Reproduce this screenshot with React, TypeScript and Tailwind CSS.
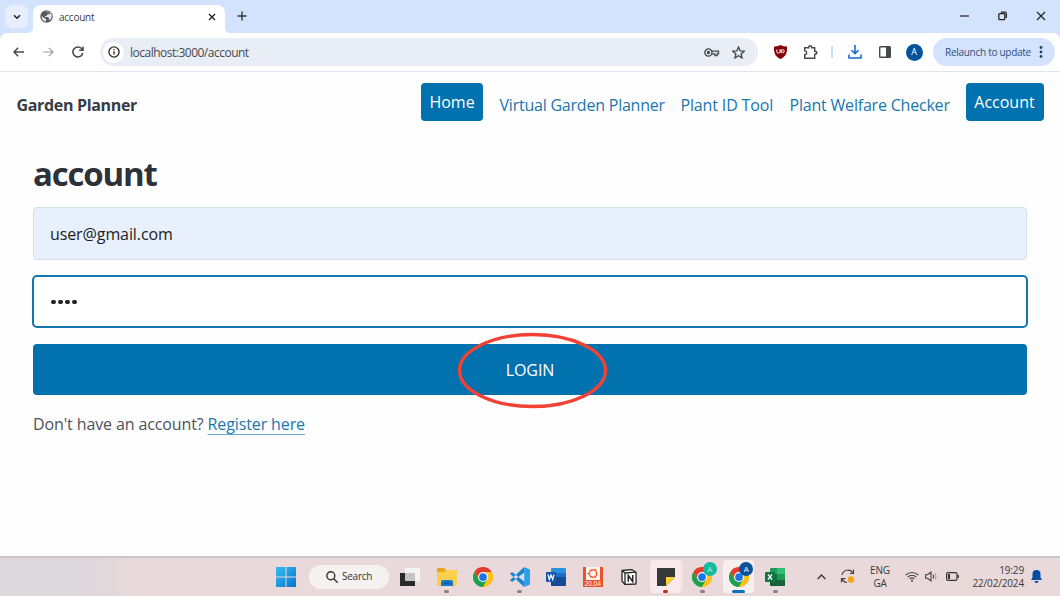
import React from 'react';

const SANS = "font-['Open_Sans','Noto_Sans',sans-serif]";

function Chrome({ size = 20 }: { size?: number }) {
  return (
    <svg width={size} height={size} viewBox="0 0 48 48">
      <circle cx="24" cy="24" r="24" fill="#fbc116" />
      <path d="M3.2 12A24 24 0 0 1 44.8 12L24 12 13.6 30Z" fill="#e33b2e" />
      <path d="M3.2 12A24 24 0 0 0 24 48L34.4 30 24 36 13.6 30Z" fill="#1ea051" />
      <path d="M44.8 12A24 24 0 0 1 24 48L34.4 30A12 12 0 0 0 34.4 18L31 12Z" fill="#fbc116" />
      <circle cx="24" cy="24" r="12" fill="#fff" />
      <circle cx="24" cy="24" r="9.3" fill="#1a73e8" />
    </svg>
  );
}

function TabStrip() {
  return (
    <div className="flex h-[33px] shrink-0 items-end bg-[#d3e2fd]">
      <div className="mb-[5px] ml-[5px] flex h-[23px] w-[23px] items-center justify-center rounded-[7px] bg-[#e6effe]">
        <svg width="8" height="6" viewBox="0 0 8 6" fill="none" stroke="#222" strokeWidth="1.6"><path d="M1 1.2l3 3 3-3" /></svg>
      </div>
      <svg width="5" height="5" viewBox="0 0 5 5"><path d="M5 0v5H0A5 5 0 0 0 5 0Z" fill="#fff" /></svg>
      <div className="flex h-[28px] w-[192px] items-center rounded-t-[8px] bg-white pb-[5px] pl-[7px] pr-[9px]">
        <svg width="13" height="13" viewBox="0 0 24 24">
          <circle cx="12" cy="12" r="11.5" fill="#575b60" />
          <path d="M3 11l5 4 3 1v5C6 21 3 17 3 11ZM10 3l5-.5 4 3.500-2 2-3 0-1 2-3 1-1 2h6l2 3-1 2 3 0c4-5 3-10 0-14" fill="#e9ecef" />
        </svg>
        <span className="ml-[6px] pt-[2px] text-[10px] tracking-[-0.25px] text-[#3c4043]">account</span>
        <svg className="ml-auto" width="8" height="8" viewBox="0 0 8 8" stroke="#222" strokeWidth="1.4"><path d="M1 1l6 6M7 1L1 7" /></svg>
      </div>
      <svg width="5" height="5" viewBox="0 0 5 5"><path d="M0 0v5h5A5 5 0 0 1 0 0Z" fill="#fff" /></svg>
      <svg className="mb-[12px] ml-[7px]" width="10" height="10" viewBox="0 0 10 10" stroke="#33383f" strokeWidth="1.4"><path d="M5 .5v9M.5 5h9" /></svg>
      <div className="mb-[12px] ml-auto mr-[14px] flex items-center">
        <svg width="9" height="10" viewBox="0 0 9 10" stroke="#222" strokeWidth="1.2"><path d="M0 5h9" /></svg>
        <svg className="ml-[29px]" width="9" height="10" viewBox="0 0 9 10" fill="none" stroke="#222" strokeWidth="1.3"><rect x=".8" y="2.700" width="6" height="6" rx="1" /><path d="M2.800 1.100H7q1.300 0 1.300 1.300V7" /></svg>
        <svg className="ml-[29px]" width="10" height="10" viewBox="0 0 10 10" stroke="#222" strokeWidth="1.2"><path d="M1 1l8 8M9 1L1 9" /></svg>
      </div>
    </div>
  );
}

function Toolbar() {
  return (
    <div className="bg-[#d3e2fd]">
      <div className="flex h-[39px] items-center rounded-t-[7px] border-b border-[#dfe5e8] bg-white pl-[13px] pr-[5px]">
        <svg width="11" height="10" viewBox="0 0 11 10" fill="none" stroke="#45484d" strokeWidth="1.500"><path d="M11 5H1.200M5.200.8L1 5l4.200 4.200" /></svg>
        <svg className="ml-[19px]" width="11" height="10" viewBox="0 0 11 10" fill="none" stroke="#9b9da0" strokeWidth="1.200"><path d="M0 5h9.800M5.800.8L10 5 5.800 9.200" /></svg>
        <svg className="ml-[18px]" width="12" height="12" viewBox="0 0 12 12" fill="none" stroke="#45484d" strokeWidth="1.500"><path d="M10.800 7A5 5 0 1 1 9.600 2.600L10.800 4M11 .5V4.300H7.200" /></svg>
        <div className="ml-[16px] flex h-[28px] w-[658px] items-center rounded-full bg-[#e9edf6] pl-[3px] pr-[13px]">
          <div className="flex h-[21px] w-[21px] items-center justify-center rounded-full bg-white">
            <svg width="12" height="12" viewBox="0 0 12 12" fill="none" stroke="#333" strokeWidth="1.400"><circle cx="6" cy="6" r="5.100" /><path d="M6 5.200v3.400M6 3v1.200" /></svg>
          </div>
          <span className="ml-[6px] pt-px text-[12px] tracking-[-0.5px] text-[#474b50]">localhost:3000/account</span>
          <svg className="ml-auto" width="16" height="9" viewBox="0 0 16 9" fill="none" stroke="#45484d" strokeWidth="1.300"><circle cx="4.400" cy="4.500" r="3.600" /><circle cx="4.400" cy="4.500" r="1" fill="#45484d" /><path d="M7.800 3.200h6.700v2.600h-1.400v1.900h-2.200V5.800H7.800" /></svg>
          <svg className="ml-[12px]" width="13" height="13" viewBox="0 0 24 24" fill="none" stroke="#45484d" strokeWidth="2.500"><path d="M12 2l3 7 7.500.6-5.700 5 1.700 7.400L12 18l-6.500 4 1.700-7.400-5.700-5L9 9Z" /></svg>
        </div>
        <svg className="ml-[16px]" width="13" height="14" viewBox="0 0 13 14"><path d="M6.500 0q3 1.500 6.500 1.500c.3 6-1 10-6.500 12.500C1 11.500-.3 7.500 0 1.500 3.500 1.500 6.500 0 6.500 0Z" fill="#86040c" /><path d="M2.800 4.500v2q0 1.600 1.600 1.600T6 6.500v-2m1 0v3.300M10.200 6.200a1.500 1.500 0 1 0-3 0 1.500 1.500 0 0 0 3 0Z" fill="none" stroke="#fff" strokeWidth="1" /></svg>
        <svg className="ml-[16px]" width="15" height="15" viewBox="0 0 15 15" fill="none" stroke="#45484d" strokeWidth="1.400"><path d="M1.700 2.700h4c0-2.600 3-2.600 3 0h3v3.600c2.800 0 2.800 3 0 3v4H1.700V9.700c2.500 0 2.500-3.800 0-3.800Z" /></svg>
        <div className="ml-[13px] h-[12px] w-[1.500px] bg-[#c9dcf9]" />
        <svg className="ml-[15px]" width="14" height="14" viewBox="0 0 14 14" fill="none" stroke="#1968d2" strokeWidth="1.600"><path d="M7 0v8.500M3.500 5.200L7 8.700l3.500-3.500M1 9.500V13h12V9.500" /></svg>
        <svg className="ml-[17px]" width="12" height="12" viewBox="0 0 12 12"><rect x=".7" y=".7" width="10.600" height="10.600" rx=".8" fill="none" stroke="#45484d" strokeWidth="1.400" /><path d="M7 1h4v10H7Z" fill="#45484d" /></svg>
        <div className="ml-[15px] flex h-[17px] w-[17px] items-center justify-center rounded-full bg-[#02539a] text-[9px] text-white">A</div>
        <div className="ml-auto flex h-[28px] w-[122px] items-center rounded-full bg-[#d3e2fd] pl-[12px]">
          <span className="whitespace-nowrap pt-px text-[10px] tracking-[-0.28px] text-[#34517b]">Relaunch to update</span>
          <svg className="ml-auto mr-[12px]" width="4" height="12" viewBox="0 0 4 12" fill="#1e426f"><circle cx="2" cy="1.500" r="1.400" /><circle cx="2" cy="6" r="1.400" /><circle cx="2" cy="10.500" r="1.400" /></svg>
        </div>
      </div>
    </div>
  );
}

function SiteNav() {
  const link = 'whitespace-nowrap text-[#1977ad]';
  return (
    <nav className="flex h-[66px] items-center pl-[16.500px] pr-[16.500px] text-[16px]">
      <span className="whitespace-nowrap font-bold tracking-[-0.33px] text-[#373c44]">Garden Planner</span>
      <a className="mb-[7px] ml-auto flex h-[38px] w-[62px] items-center justify-center rounded-[4px] bg-[#0172ad] pt-px text-white">Home</a>
      <a className={`${link} ml-[16.500px] w-[165px] tracking-[-0.22px]`}>Virtual Garden Planner</a>
      <a className={`${link} ml-[16px] w-[93px] tracking-[-0.15px]`}>Plant ID Tool</a>
      <a className={`${link} ml-[16px] w-[160px] tracking-[-0.2px]`}>Plant Welfare Checker</a>
      <a className="mb-[7px] ml-[16px] flex h-[38px] w-[78px] items-center justify-center rounded-[4px] bg-[#0172ad] pt-px text-white">Account</a>
    </nav>
  );
}

function LoginForm() {
  return (
    <main className="flex flex-1 flex-col px-[33px] pt-[12px] text-[16px]">
      <h1 className="h-[57px] text-[33px] font-bold leading-[48px] tracking-[-1.200px] text-[#2d3138]">account</h1>
      <div className="flex h-[53px] items-center rounded-[4px] border border-[#d5deeb] bg-[#e8f0fe] pl-[16px] pt-px tracking-[-0.1px] text-[#1b1d20]">user@gmail.com</div>
      <div className="mx-[-1px] mt-[15px] flex h-[53px] items-center gap-[2.500px] rounded-[5px] border-2 border-[#1177ae] bg-white pl-[17px] pt-px">
        {[0, 1, 2, 3].map((n) => <span key={n} className="h-[4.500px] w-[4.500px] rounded-full bg-[#222]" />)}
      </div>
      <div className="relative mt-[16px] flex h-[51px] items-center justify-center rounded-[4px] bg-[#0172ad] text-white">
        <span className="tracking-[-0.1px]">LOGIN</span>
        <svg className="absolute left-[424px] top-[-12px]" width="151" height="77" viewBox="0 0 151 77" fill="none" stroke="#f34235" strokeWidth="3.400"><ellipse cx="75.500" cy="38.500" rx="73" ry="36" /></svg>
      </div>
      <p className="mt-[17px] tracking-[-0.12px] text-[#4d525a]">Don't have an account? <a className="text-[#1977ad] underline decoration-[#68aed5] decoration-1 underline-offset-[4px] [text-decoration-skip-ink:none]">Register here</a></p>
    </main>
  );
}

function Slot({ children, mark = '', active = '' }: { children: React.ReactNode; mark?: string; active?: string }) {
  return (
    <div className="flex w-[36.500px] justify-center">
      <div className={`relative flex h-[33px] w-[31px] items-center justify-center rounded-[4px] ${active}`}>
        {children}
        {mark && <span className={`absolute bottom-0 h-[3px] rounded-full ${mark}`} />}
      </div>
    </div>
  );
}

function Taskbar() {
  return (
    <footer className="flex h-[40px] shrink-0 items-center border-t-2 border-[#cec5c7] bg-[linear-gradient(90deg,#dcd8dc_0px,#dcd8dc_85px,#ead9da_150px)] pb-px">
      <div className="ml-[267.500px] flex items-center">
        <Slot><svg width="20" height="20" viewBox="0 0 20 20"><defs><linearGradient id="win" x2="1" y2="1"><stop stopColor="#36bdf0" /><stop offset="1" stopColor="#0873d0" /></linearGradient></defs><path d="M0 0h9.500v9.500H0ZM10.500 0H20v9.500h-9.500ZM0 10.500h9.500V20H0ZM10.500 10.500H20V20h-9.500Z" fill="url(#win)" /></svg></Slot>
        <div className="ml-[5px] mr-[3px] flex h-[24px] w-[80px] items-center rounded-full bg-[#f7f2f2] pl-[17px]">
          <svg width="12" height="12" viewBox="0 0 12 12" fill="none" stroke="#333" strokeWidth="1.400"><circle cx="4.800" cy="4.800" r="4" /><path d="M7.700 7.700l4 4" /></svg>
          <span className="ml-[4px] text-[10px] font-medium tracking-[-0.25px] text-[#333]">Search</span>
        </div>
        <Slot><svg width="20" height="18" viewBox="0 0 20 18"><path d="M0 5h15v13H0Z" fill="#292a2d" /><path d="M5 0h15v13H5Z" fill="#f5f4f4" /><path d="M5 5h10v8H5Z" fill="#c4c2c3" /></svg></Slot>
        <Slot mark="w-[5px] bg-[#8b8082]"><svg width="20" height="18" viewBox="0 0 20 18"><path d="M0 1.500Q0 0 1.500 0H7l2 2h9.500Q20 2 20 3.500V16q0 1.500-1.500 1.500h-17Q0 17.500 0 16Z" fill="#e8a31a" /><path d="M0 4h7l2-2h9.500Q20 2 20 3.500V16q0 1.500-1.500 1.500h-17Q0 17.500 0 16Z" fill="#fbd04c" /><path d="M4 18v-4q0-2 2-2h8q2 0 2 2v4Z" fill="#1777c9" /><path d="M7 14.500h6v1.200H7Z" fill="#0b559c" /></svg></Slot>
        <Slot><Chrome /></Slot>
        <Slot mark="w-[5px] bg-[#8b8082]"><svg width="20" height="20" viewBox="0 0 24 24"><path d="M17 17.500L2.500 6 0 8l17 16ZM17 6.500L2.500 18 0 16 17 0Z" fill="#1684cf" /><path d="M17 0l7 3v18l-7 3Z" fill="#29a2eb" /></svg></Slot>
        <Slot><svg width="20" height="18" viewBox="0 0 20 18"><rect x="5" width="15" height="18" rx="1" fill="#2b91df" /><path d="M5 5h15v4H5Z" fill="#1d6dc3" /><path d="M5 9h15v8q0 1-1 1H6q-1 0-1-1Z" fill="#174b96" /><rect y="4" width="10" height="10" rx="1" fill="#1653ad" /><path d="M2 6.500l1.300 5L5 7l1.700 4.500L8 6.500" fill="none" stroke="#fff" strokeWidth="1.200" /></svg></Slot>
        <Slot>
          <div className="flex h-[20px] w-[20px] flex-col items-center bg-[#e8532a]">
            <svg width="14" height="13" viewBox="0 0 14 13"><path d="M0 0h14v13H0Z" fill="#fff5ef" /><circle cx="7" cy="6.500" r="3.700" fill="none" stroke="#e8532a" strokeWidth="1.500" /><circle cx="3" cy="6.500" r="1.500" fill="#e8532a" stroke="#fff5ef" strokeWidth=".6" /><circle cx="9" cy="3" r="1.500" fill="#e8532a" stroke="#fff5ef" strokeWidth=".6" /><circle cx="9" cy="10" r="1.500" fill="#e8532a" stroke="#fff5ef" strokeWidth=".6" /></svg>
            <span className="text-[6.500px] leading-[7px] text-white">20.04</span>
          </div>
        </Slot>
        <Slot><svg width="16" height="16" viewBox="0 0 16 16"><path d="M1 1.500L11 .7l4 2.500V15l-11 .5L1 12Z" fill="#fff" stroke="#262626" strokeWidth="1.300" strokeLinejoin="round" /><path d="M1 1.500L4 4l11-.8M4 4v11.500" fill="none" stroke="#262626" strokeWidth="1.300" /><path d="M7.300 12.800V6.500l4.400 6V6" fill="none" stroke="#222" strokeWidth="1.500" /></svg></Slot>
        <Slot mark="w-[5px] bg-[#c42b1c]" active="bg-[#fae9ea] shadow-[2px_0_0_#f2e0e1]"><svg width="18" height="18" viewBox="0 0 18 18"><path d="M0 0h18v9l-9 9H0Z" fill="#37383a" /><path d="M9 18V9h9Z" fill="#fad432" /></svg></Slot>
        <Slot mark="w-[5px] bg-[#8b8082]"><Chrome /><span className="absolute right-[1px] top-[2px] flex h-[14px] w-[14px] items-center justify-center rounded-full bg-[#13ba9b] text-[8px] text-[#a9eee0]">A</span></Slot>
        <Slot mark="w-[13px] bg-[#0c70bd]" active="bg-[#f7eff0]"><Chrome /><span className="absolute right-[1px] top-[2px] flex h-[14px] w-[14px] items-center justify-center rounded-full bg-[#07529a] text-[8px] text-white">A</span></Slot>
        <Slot mark="w-[5px] bg-[#8b8082]"><svg width="20" height="18" viewBox="0 0 20 18"><rect x="5" width="15" height="18" rx="1" fill="#1e9a58" /><path d="M12 0h7q1 0 1 1v5h-8Z" fill="#32bd78" /><path d="M5 6h7v6H5Z" fill="#146b3c" /><path d="M5 12h15v5q0 1-1 1H6q-1 0-1-1Z" fill="#17613a" /><rect y="4" width="10" height="10" rx="1" fill="#107641" /><path d="M3 6.500l4 5M7 6.500l-4 5" stroke="#fff" strokeWidth="1.300" /></svg></Slot>
      </div>
      <div className="ml-auto mr-[18px] flex items-center text-[#39393b]">
        <svg width="9" height="6" viewBox="0 0 9 6" fill="none" stroke="#333" strokeWidth="1.300"><path d="M.7 5l3.800-4 3.800 4" /></svg>
        <svg className="ml-[14px]" width="16" height="15" viewBox="0 0 16 15" fill="none" stroke="#484547" strokeWidth="1.200"><path d="M2 6a6 6 0 0 1 11-2M13.500.5V4.500H9.800M1.500 13.500V9.700h4M2 10a6 6 0 0 0 5 3.500" /><circle cx="11" cy="10.500" r="3.200" fill="#f3a51c" stroke="none" /></svg>
        <div className="ml-[13px] w-[22px] text-center text-[10px] leading-[12.500px] tracking-[-0.2px]">ENG<br />GA</div>
        <svg className="ml-[14px]" width="14" height="11" viewBox="0 0 14 11" fill="none" stroke="#444" strokeWidth="1.100"><path d="M.7 4a9 9 0 0 1 12.600 0M2.700 6a6.200 6.200 0 0 1 8.600 0M4.700 8a3.300 3.300 0 0 1 4.600 0" /><circle cx="7" cy="9.700" r="1" fill="#444" stroke="none" /></svg>
        <svg className="ml-[6px]" width="13" height="11" viewBox="0 0 13 11" fill="none" stroke="#444" strokeWidth="1.100"><path d="M.6 3.700h2L6 1v9L2.600 7.300h-2ZM8 3.500q1.300 2 0 4" /><path d="M9.800 2q2.400 3.500 0 7" stroke="#aaa0a2" /></svg>
        <svg className="ml-[8px]" width="13" height="9" viewBox="0 0 13 9" fill="none" stroke="#333" strokeWidth="1.200"><rect x=".6" y=".6" width="10.400" height="7.800" rx="1.500" /><path d="M12.300 3v3" /><path d="M2 2h2v5H2Z" fill="#333" stroke="none" /></svg>
        <div className="ml-[12px] w-[53px] whitespace-nowrap text-right text-[10px] leading-[12.500px] tracking-[-0.15px]">19:29<br />22/02/2024</div>
        <svg className="ml-[7px]" width="11" height="13" viewBox="0 0 11 13" fill="#064da2"><path d="M5.500 0A4 4 0 0 1 9.500 4v3.500L11 10H0l1.500-2.500V4A4 4 0 0 1 5.500 0ZM3.500 11h4a2 2 0 0 1-4 0Z" /></svg>
      </div>
    </footer>
  );
}

export default function App() {
  return (
    <div className={`flex h-[596px] w-[1060px] flex-col overflow-hidden bg-[#fefefe] ${SANS}`}>
      <TabStrip />
      <Toolbar />
      <SiteNav />
      <LoginForm />
      <Taskbar />
    </div>
  );
}
